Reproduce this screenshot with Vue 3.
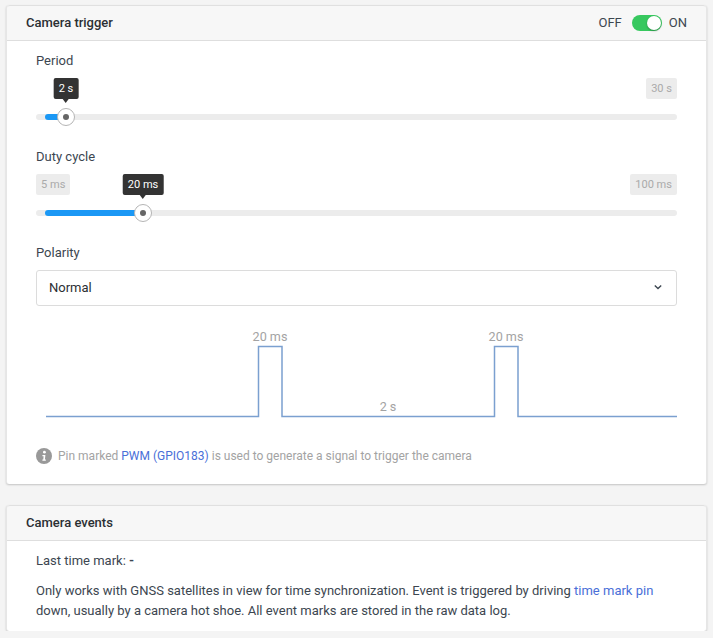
<template>
  <div class="page">
    <section class="card">
      <header class="card-header">
        <span class="card-title">Camera trigger</span>
        <div class="switch-wrap">
          <span>OFF</span>
          <span class="switch"><span class="switch-knob"></span></span>
          <span>ON</span>
        </div>
      </header>
      <div class="card-body">
        <div v-for="s in sliders" :key="s.label" class="slider-block">
          <div class="field-label">{{ s.label }}</div>
          <div class="slider">
            <span v-if="s.min" class="limit">{{ s.min }}</span>
            <span class="limit limit-max">{{ s.max }}</span>
            <span class="tip" :style="{ left: s.pos + 'px' }">{{ s.value }}</span>
            <div class="track">
              <div class="fill" :style="{ width: s.pos - 9 + 'px' }"></div>
              <div class="thumb" :style="{ left: s.pos + 'px' }"></div>
            </div>
          </div>
        </div>

        <div class="field-label polarity-label">Polarity</div>
        <div class="select">
          <span>Normal</span>
          <svg width="10" height="6" viewBox="0 0 10 6">
            <path d="M1.8 1.6 L5 4.6 L8.2 1.6" fill="none" stroke="#3c4650" stroke-width="1.4" />
          </svg>
        </div>

        <svg class="chart" width="641" height="110" viewBox="0 0 641 110">
          <path
            d="M10 96.5 H222.5 V26.5 H246 V96.5 H458.5 V26.5 H482 V96.5 H641"
            fill="none"
            stroke="#7ba0d0"
            stroke-width="1.5"
          />
          <text x="234" y="21" class="chart-text">20 ms</text>
          <text x="470" y="21" class="chart-text">20 ms</text>
          <text x="352" y="91" class="chart-text">2 s</text>
        </svg>

        <div class="hint">
          <svg width="16" height="16" viewBox="0 0 16 16">
            <circle cx="8" cy="8" r="8" fill="#999" />
            <circle cx="8.4" cy="4.2" r="1.4" fill="#fff" />
            <path d="M6.4 7 H9.4 L8.9 11.6 H9.8 V12.8 H6.4 V11.6 H7.3 L7.6 8.2 H6.4 Z" fill="#fff" />
          </svg>
          <span>Pin marked <a class="link">PWM (GPIO183)</a> is used to generate a signal to trigger the camera</span>
        </div>
      </div>
    </section>

    <section class="card">
      <header class="card-header">
        <span class="card-title">Camera events</span>
      </header>
      <div class="card-body events">
        <p class="mark">Last time mark: <b>-</b></p>
        <p>Only works with GNSS satellites in view for time synchronization. Event is triggered by driving <a class="link">time mark pin</a> down, usually by a camera hot shoe. All event marks are stored in the raw data log.</p>
      </div>
    </section>
  </div>
</template>

<script setup>
// pos = thumb centre measured from the track's left edge
const sliders = [
  { label: 'Period', value: '2 s', max: '30 s', pos: 30 },
  { label: 'Duty cycle', value: '20 ms', min: '5 ms', max: '100 ms', pos: 107 }
]
</script>

<style>
html, body {
  margin: 0;
  background: #f4f4f4;
}
</style>

<style scoped>
.page {
  padding: 5px 6px 0;
  display: flex;
  flex-direction: column;
  gap: 21px;
  font-family: Roboto, "Liberation Sans", sans-serif;
  font-size: 13px;
  color: #3c4650;
}

.card {
  background: #fff;
  border-radius: 3px;
  box-shadow: 0 1px 2px rgba(0, 0, 0, 0.2);
  border: 1px solid #e6e6e6;
  border-bottom: 0;
  border-top: 0;
}

.card-header {
  height: 34px;
  box-sizing: content-box;
  display: flex;
  align-items: center;
  justify-content: space-between;
  padding: 0 19px;
  background: #f7f7f7;
  border-bottom: 1px solid #dedede;
  border-top: 1px solid #e0e0e0;
  border-radius: 3px 3px 0 0;
}

.card-title {
  font-weight: 500;
  color: #2b2f33;
  margin-top: -1px;
}

.switch-wrap {
  display: flex;
  align-items: center;
  gap: 7px;
  margin-top: -1px;
}

.switch-wrap > span:first-child {
  margin-right: 3px;
}

.switch {
  width: 30px;
  height: 16px;
  border-radius: 8px;
  background: #37c85f;
  position: relative;
}

.switch-knob {
  position: absolute;
  right: 0;
  top: 0;
  width: 14px;
  height: 14px;
  margin: 1px;
  border-radius: 50%;
  background: #fff;
  box-shadow: 0 1px 2px rgba(0, 0, 0, 0.3);
}

.card-body {
  padding: 10px 29px 19px;
}

.field-label {
  line-height: 20px;
}

.slider-block + .slider-block {
  margin-top: -1px;
}

.slider {
  position: relative;
  height: 77px;
  box-sizing: border-box;
  padding-top: 43px;
}

.limit {
  position: absolute;
  top: 7px;
  left: 0;
  height: 21px;
  line-height: 21px;
  padding: 0 5px;
  border-radius: 2px;
  background: #ececec;
  color: #aaa;
  font-size: 11.05px;
}

.limit-max {
  left: auto;
  right: 0;
}

.tip {
  position: absolute;
  top: 7px;
  height: 21px;
  line-height: 21px;
  padding: 0 5px;
  border-radius: 2px;
  background: #333;
  color: #fff;
  font-size: 11.05px;
  white-space: nowrap;
  transform: translateX(-50%);
}

.tip::after {
  content: '';
  position: absolute;
  left: 50%;
  bottom: -4px;
  margin-left: -3.5px;
  border: 3.5px solid transparent;
  border-top-width: 4px;
  border-bottom: 0;
  border-top-color: #333;
}

.track {
  position: relative;
  height: 6px;
  border-radius: 3px;
  background: #ececec;
}

.fill {
  height: 6px;
  margin-left: 9px;
  border-radius: 3px 0 0 3px;
  background: #1b98f5;
}

.thumb {
  position: absolute;
  top: -6px;
  width: 18px;
  height: 18px;
  box-sizing: border-box;
  margin-left: -9px;
  border: 1px solid #b5b5b5;
  border-radius: 50%;
  background: #fff;
}

.thumb::after {
  content: '';
  position: absolute;
  left: 5px;
  top: 5px;
  width: 6px;
  height: 6px;
  border-radius: 50%;
  background: #666;
}

.polarity-label {
  margin-top: -1px;
}

.select {
  margin-top: 7px;
  height: 36px;
  box-sizing: border-box;
  display: flex;
  align-items: center;
  justify-content: space-between;
  padding: 0 13px 2px 12px;
  border: 1px solid #dcdcdc;
  border-radius: 3px;
  color: #2b2f33;
}

.chart {
  display: block;
  margin-top: 14px;
}

.chart-text {
  fill: #a3a3a3;
  font-size: 12.6px;
  text-anchor: middle;
}

.hint {
  display: flex;
  align-items: center;
  gap: 6px;
  margin-top: 17px;
  font-size: 12px;
  color: #a3a3a3;
  line-height: 18px;
}

.link {
  color: #4a6fd8;
}

.events {
  padding-top: 10px;
  padding-bottom: 10px;
}

.events p {
  margin: 0;
  line-height: 20px;
}

.events .mark {
  margin-bottom: 10px;
}

.mark b {
  font-weight: 700;
}
</style>
